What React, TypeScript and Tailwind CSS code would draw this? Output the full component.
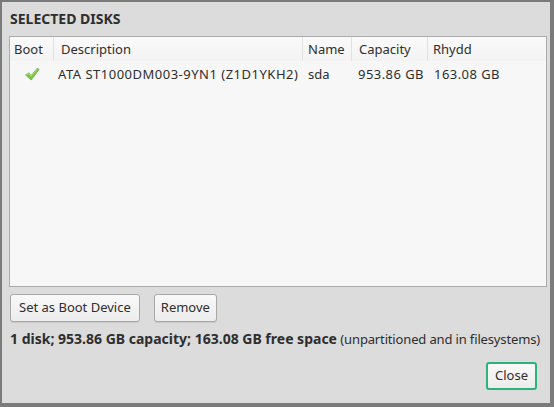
import { useState } from 'react';

const font = { fontFamily: '"Noto Sans", "Open Sans", sans-serif' };

function CheckIcon() {
  return (
    <svg width="16" height="16" viewBox="0 0 16 16">
      <path d="M1.5 9 L5 6.8 L7 9.5 L13.5 2 L15 3.5 L7.2 14 Z" fill="#76c545" stroke="#5aa52c" strokeWidth="0.6" strokeLinejoin="round" />
      <path d="M2.2 9.1 L5 7.5 L7 10.2 L13.5 2.8" fill="none" stroke="#b4e68c" strokeWidth="0.8" />
    </svg>
  );
}

export default function App() {
  const [selected] = useState('sda');

  const disks = [
    {
      id: 'sda',
      description: 'ATA ST1000DM003-9YN1 (Z1D1YKH2)',
      name: 'sda',
      capacity: '953.86 GB',
      free: '163.08 GB',
      boot: true,
    },
  ];

  return (
    <div className="w-[554px] h-[407px] bg-[#7b7b7b] pl-[2px] pt-[2px] pr-[4px] pb-[4px] text-[#2e2e2e]" style={font}>
      <div className="h-full bg-[#dcdcdc] flex flex-col pl-[7px] pr-[3px]">
        {/* Title */}
        <div className="h-[34px] pt-[8px] text-[14px] font-bold leading-[18px] pl-[1px]">SELECTED DISKS</div>

        {/* Disk table */}
        <div className="h-[251px] border border-[#ababab] bg-[#f7f7f7]">
          <div className="grid grid-cols-[44px_249px_49px_76px_1fr] h-[24px] text-[13px] leading-[24px] bg-gradient-to-b from-[#fafafa] to-[#f3f3f3]">
            <div className="pl-[4px] border-r border-[#e2e2e2]">Boot</div>
            <div className="pl-[7px] border-r border-[#e2e2e2]">Description</div>
            <div className="pl-[5px] border-r border-[#e2e2e2]">Name</div>
            <div className="pl-[7px] border-r border-[#e2e2e2]">Capacity</div>
            <div className="pl-[5px]">Rhydd</div>
          </div>
          {disks.map((disk) => (
            <div
              key={disk.id}
              className={`grid grid-cols-[44px_249px_49px_76px_1fr] h-[26px] text-[13px] leading-[26px] ${selected === disk.id ? 'bg-[#f7f7f7]' : ''}`}
            >
              <div className="flex items-center pl-[14px]">{disk.boot && <CheckIcon />}</div>
              <div className="pl-[4px] whitespace-nowrap tracking-[0.5px]">{disk.description}</div>
              <div className="pl-[5px]">{disk.name}</div>
              <div className="pl-[6px] whitespace-nowrap tracking-[0.45px]">{disk.capacity}</div>
              <div className="pl-[6px] whitespace-nowrap tracking-[0.45px]">{disk.free}</div>
            </div>
          ))}
        </div>

        {/* Actions */}
        <div className="flex gap-[14px] mt-[7px] pl-[1px]">
          <button className="h-[28px] px-[8px] text-[13px] rounded-[3px] border border-[#a8a8a8] bg-gradient-to-b from-[#f9f9f9] to-[#ececec] shadow-[0_1px_0_rgba(0,0,0,0.08)]">
            Set as Boot Device
          </button>
          <button className="h-[28px] px-[6px] text-[13px] rounded-[3px] border border-[#a8a8a8] bg-gradient-to-b from-[#f9f9f9] to-[#ececec] shadow-[0_1px_0_rgba(0,0,0,0.08)]">
            Remove
          </button>
        </div>

        {/* Summary */}
        <div className="mt-[8px] text-[13px] leading-[18px] whitespace-nowrap pl-[1px]">
          <span className="font-bold text-[14px]">1 disk; 953.86 GB capacity; 163.08 GB free space</span>{' '}
          <span className="tracking-[-0.15px]">(unpartitioned and in filesystems)</span>
        </div>

        {/* Footer */}
        <div className="flex justify-end mt-[14px] pr-[10px]">
          <button className="h-[28px] px-[7px] text-[13px] rounded-[3px] border-2 border-[#2db37a] bg-gradient-to-b from-[#f9f9f9] to-[#ececec]">
            Close
          </button>
        </div>
      </div>
    </div>
  );
}
